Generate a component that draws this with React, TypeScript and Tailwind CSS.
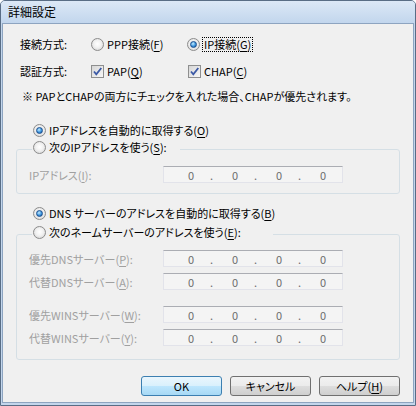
import React from "react";

// Vista風「詳細設定」ダイアログ

const Acc = ({ c }: { c: string }) => <u className="underline-offset-[2px]">{c}</u>;

function Radio({ on }: { on?: boolean }) {
  return (
    <span className="flex h-[13px] w-[13px] shrink-0 items-center justify-center rounded-full border border-[#8c8c8c] bg-[radial-gradient(circle_at_50%_45%,#ffffff,#f1f1f1_45%,#cdcdcd)]">
      {on && (
        <span className="h-[7px] w-[7px] rounded-full border border-[#1c4f8e] bg-[radial-gradient(circle_at_40%_35%,#c4ecff,#3b94de_55%,#134f90)]" />
      )}
    </span>
  );
}

function Check() {
  return (
    <span className="flex h-[13px] w-[13px] shrink-0 items-center justify-center border border-[#8e8f8f] bg-[linear-gradient(135deg,#d6d6d6,#f8f8f8)]">
      <svg width="11" height="11" viewBox="0 0 11 11">
        <path d="M2 5.5 L4.3 8.3 L9.3 2" fill="none" stroke="#3c5aa6" strokeWidth="1.8" />
      </svg>
    </span>
  );
}

function IpField() {
  return (
    <div className="flex h-[17px] w-[180px] items-center border border-[#e2e3ea] border-t-[#abadb3] bg-[#f4f4f4] pl-[8px] text-[#6d6d6d]">
      {[0, 1, 2, 3].map((i) => (
        <React.Fragment key={i}>
          <span className="w-[38px] text-center">0</span>
          {i < 3 && <span className="w-[6px]">.</span>}
        </React.Fragment>
      ))}
    </div>
  );
}

function FieldRow({ label, k, mt }: { label: string; k: string; mt: string }) {
  return (
    <div className={`flex h-[17px] items-center ${mt}`}>
      <span className="w-[134px] text-[#a0a0a0]">
        {label}(<Acc c={k} />):
      </span>
      <IpField />
    </div>
  );
}

function Btn({ children, def }: { children: React.ReactNode; def?: boolean }) {
  return (
    <button
      type="button"
      className={`flex h-[20px] w-[81px] items-center justify-center rounded-[3px] border ${
        def
          ? "border-[#3c7fb1] bg-[linear-gradient(#eaf6fd,#d9f0fc_50%,#bee6fd_50%,#a7d9f5)]"
          : "border-[#707070] bg-[linear-gradient(#f2f2f2,#ebebeb_50%,#dddddd_50%,#cfcfcf)]"
      }`}
    >
      {children}
    </button>
  );
}

export default function App() {
  return (
    <div className="flex h-[406px] w-[416px] flex-col overflow-hidden rounded-t-[5px] border border-[#596d85] bg-[#c3d6ec] text-[11px] leading-[16px] text-black font-['Noto_Sans_CJK_JP','Noto_Sans',sans-serif] [font-feature-settings:'palt']">
      {/* タイトルバー */}
      <div className="flex h-[22px] shrink-0 items-center bg-[linear-gradient(#dce8f6,#c2d6ed)] pl-[7px] text-[12px]">
        詳細設定
      </div>

      <div className="flex flex-1 px-[1px] pb-[2px]">
        <div className="flex flex-1 flex-col border border-[#8da4c0] bg-[#f0f0f0]">
          {/* 接続方式 */}
          <div className="mt-[12px] flex h-[16px] items-center pl-[17px]">
            <span className="w-[71px]">接続方式:</span>
            <div className="flex w-[96px] items-center gap-[3px]">
              <Radio />
              <span>
                PPP接続(<Acc c="F" />)
              </span>
            </div>
            <div className="flex items-center gap-[2px]">
              <Radio on />
              <span className="border border-dotted border-black px-[1px] leading-[13px]">
                IP接続(<Acc c="G" />)
              </span>
            </div>
          </div>

          {/* 認証方式 */}
          <div className="mt-[11px] flex h-[16px] items-center pl-[17px]">
            <span className="w-[71px]">認証方式:</span>
            <div className="flex w-[97px] items-center gap-[3px]">
              <Check />
              <span>
                PAP(<Acc c="Q" />)
              </span>
            </div>
            <div className="flex items-center gap-[3px]">
              <Check />
              <span>
                CHAP(<Acc c="C" />)
              </span>
            </div>
          </div>

          <div className="mt-[9px] h-[16px] pl-[19px]">
            ※ PAPとCHAPの両方にチェックを入れた場合、CHAPが優先されます。
          </div>

          {/* IPアドレス */}
          <div className="mt-[18px] flex h-[16px] items-center gap-[3px] pl-[30px]">
            <Radio on />
            <span>
              IPアドレスを自動的に取得する(<Acc c="O" />)
            </span>
          </div>

          <fieldset className="ml-[13px] mt-[1px] w-[384px] rounded-[3px] border border-[#d5dfe5] pb-[10px] pl-[12px]">
            <legend className="ml-[3px] w-[148px] pb-[5px] pl-[1px]">
              <div className="flex h-[16px] items-center gap-[3px]">
                <Radio />
                <span>
                  次のIPアドレスを使う(<Acc c="S" />):
                </span>
              </div>
            </legend>
            <FieldRow label="IPアドレス" k="I" mt="mt-[6px]" />
          </fieldset>

          {/* DNS */}
          <div className="mt-[11px] flex h-[16px] items-center gap-[3px] pl-[30px]">
            <Radio on />
            <span>
              DNS サーバーのアドレスを自動的に取得する(<Acc c="B" />)
            </span>
          </div>

          <fieldset className="ml-[13px] mt-[3px] w-[384px] rounded-[3px] border border-[#d5dfe5] pb-[13px] pl-[12px]">
            <legend className="ml-[3px] w-[241px] pb-[5px] pl-[1px]">
              <div className="flex h-[16px] items-center gap-[3px]">
                <Radio />
                <span>
                  次のネームサーバーのアドレスを使う(<Acc c="E" />):
                </span>
              </div>
            </legend>
            <FieldRow label="優先DNSサーバー" k="P" mt="mt-[5px]" />
            <FieldRow label="代替DNSサーバー" k="A" mt="mt-[6px]" />
            <FieldRow label="優先WINSサーバー" k="W" mt="mt-[16px]" />
            <FieldRow label="代替WINSサーバー" k="Y" mt="mt-[6px]" />
          </fieldset>

          {/* ボタン */}
          <div className="mt-[16px] flex justify-end gap-[8px] pr-[13px]">
            <Btn def>OK</Btn>
            <Btn>キャンセル</Btn>
            <Btn>
              ヘルプ(<Acc c="H" />)
            </Btn>
          </div>
        </div>
      </div>
    </div>
  );
}
